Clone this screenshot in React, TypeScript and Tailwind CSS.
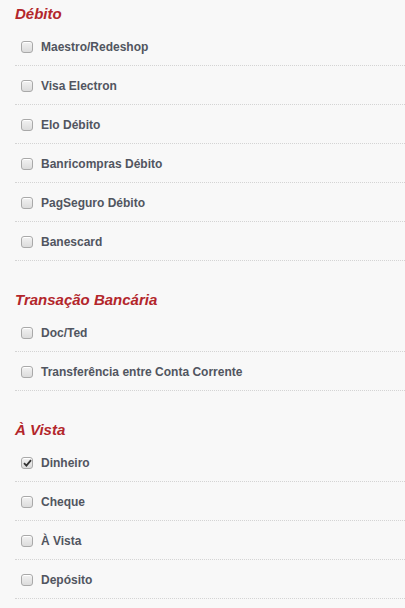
import React from "react";

const sections = [
  {
    title: "Débito",
    items: [
      { label: "Maestro/Redeshop" },
      { label: "Visa Electron" },
      { label: "Elo Débito" },
      { label: "Banricompras Débito" },
      { label: "PagSeguro Débito" },
      { label: "Banescard" },
    ],
  },
  {
    title: "Transação Bancária",
    items: [{ label: "Doc/Ted" }, { label: "Transferência entre Conta Corrente" }],
  },
  {
    title: "À Vista",
    items: [
      { label: "Dinheiro", checked: true },
      { label: "Cheque" },
      { label: "À Vista" },
      { label: "Depósito" },
    ],
  },
];

function Checkbox({ checked }: { checked?: boolean }) {
  return (
    <span className="flex h-[12px] w-[12px] shrink-0 items-center justify-center rounded-[3px] border border-[#a9a9a9] bg-gradient-to-b from-[#f2f2f2] to-[#dcdcdc] shadow-[inset_0_1px_0_#fff]">
      {checked && (
        <svg width="9" height="8" viewBox="0 0 9 8">
          <path d="M1 4.2 L3.4 6.6 L8 1.2" fill="none" stroke="#333" strokeWidth="1.8" />
        </svg>
      )}
    </span>
  );
}

export default function App() {
  const [state, setState] = React.useState<Record<string, boolean>>({ "À Vista-Dinheiro": true });

  return (
    <div className="min-h-screen bg-[#f8f8f8] font-['Liberation_Sans',Arial,sans-serif]">
      {sections.map((section, si) => (
        <div key={section.title} className={si > 0 ? "mt-[25px]" : ""}>
          <h2 className="h-[27px] pl-[15px] text-[15px] leading-[27px] font-bold italic text-[#b3262b]">
            {section.title}
          </h2>
          <ul className="ml-[15px]">
            {section.items.map((item) => {
              const key = section.title + "-" + item.label;
              return (
                <li key={key} className="border-b border-dotted border-[#d4d4d4]">
                  <label
                    className="flex h-[38px] cursor-pointer items-center gap-[8px] pl-[6px] pt-[1px]"
                    onClick={() => setState({ ...state, [key]: !state[key] })}
                  >
                    <Checkbox checked={state[key]} />
                    <span className="text-[12px] font-bold text-[#515560]">{item.label}</span>
                  </label>
                </li>
              );
            })}
          </ul>
        </div>
      ))}
    </div>
  );
}
